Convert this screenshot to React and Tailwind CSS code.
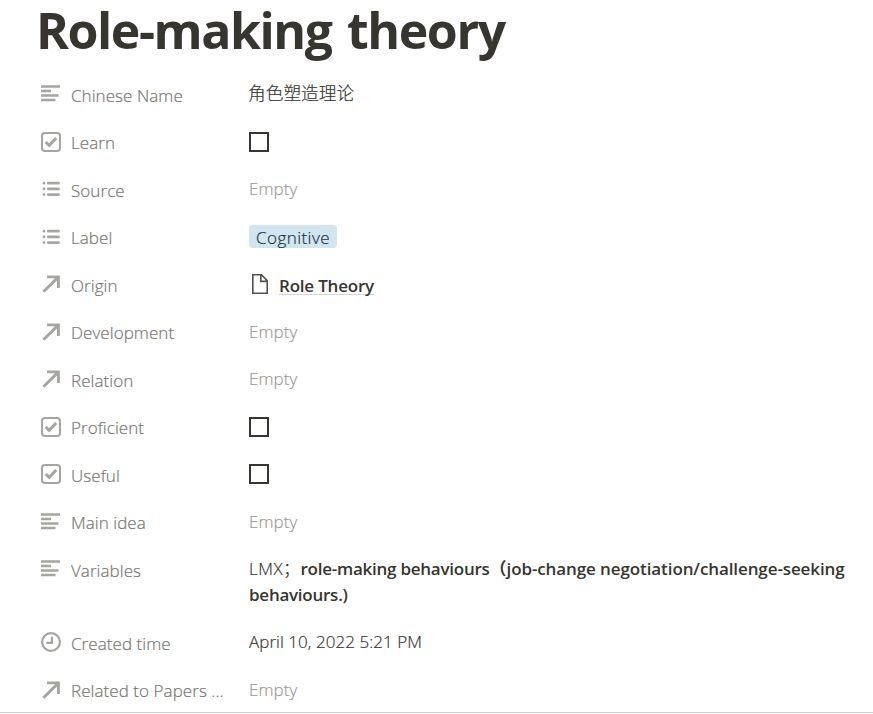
const icons = {
  text: (
    <svg viewBox="0 0 20 20" className="h-5 w-5" fill="#a5a5a1">
      <path d="M0 1.3h19v2.5H0zM0 5.8h10v2.5H0zM0 10.3h17.5v2.5H0zM0 14.8h14.5v2.5H0z" />
    </svg>
  ),
  check: (
    <svg viewBox="0 0 20 20" className="h-5 w-5" fill="none" stroke="#a5a5a1">
      <rect x="1" y="1" width="18" height="18" rx="3" strokeWidth="2" />
      <path d="M4.6 10l3.6 3.4 7-7.4" strokeWidth="3" />
    </svg>
  ),
  list: (
    <svg viewBox="0 0 20 20" className="h-5 w-5" stroke="#a5a5a1" strokeLinecap="round" strokeWidth="2.8">
      <path d="M7.3 4.2h10.2M7.3 9.9h10.2M7.3 15.6h10.2M2.9 4.2h.1M2.9 9.9h.1M2.9 15.6h.1" />
    </svg>
  ),
  arrow: (
    <svg viewBox="0 0 20 20" className="h-5 w-5" fill="none" stroke="#a5a5a1" strokeWidth="2.9">
      <path d="M6 2.9h11.4v11.2M17 3.4L2.4 17.8" />
    </svg>
  ),
  clock: (
    <svg viewBox="0 0 20 20" className="h-5 w-5" fill="none" stroke="#a5a5a1" strokeWidth="2.2">
      <circle cx="10" cy="10" r="8.9" />
      <path d="M10.9 4.8v6H5.2" />
    </svg>
  ),
};

const Empty = () => <span className="tracking-[0.08px] text-[#9b9a97] [-webkit-text-stroke:0.2px]">Empty</span>;
const Box = () => <span className="h-5 w-5 border-2 border-[#37352f]" />;

function Row({ icon, label, children, tall }) {
  return (
    <div className={tall ? "flex h-[73px] items-start" : "flex h-[47.5px] items-start"}>
      <div className="flex w-[208px] items-start gap-[10px]">
        <div className="mt-[13px]">{icons[icon]}</div>
        <span className="mt-[11.5px] whitespace-nowrap leading-[26px] tracking-[0.06px] text-[#787773] [-webkit-text-stroke:0.2px]">{label}</span>
      </div>
      <div className="mt-[10px] flex min-h-[26px] items-center leading-[26px]">{children}</div>
    </div>
  );
}

export default function App() {
  return (
    <div lang="zh-CN" className="flex h-[714px] flex-col bg-white font-['Open_Sans','Noto_Sans_CJK_SC',sans-serif] text-[17px] font-light text-[#37352f]">
      <div className="h-[712px] pl-[41px]">
        <h1 className="-ml-[5px] h-[71px] whitespace-nowrap text-[50px] font-bold leading-[61px] tracking-[-1.45px] [word-spacing:4px]">Role-making theory</h1>
        <Row icon="text" label="Chinese Name"><span className="-mt-[2px] -ml-px text-[17.7px] [-webkit-text-stroke:0.2px]">角色塑造理论</span></Row>
        <Row icon="check" label="Learn"><Box /></Row>
        <Row icon="list" label="Source"><Empty /></Row>
        <Row icon="list" label="Label">
          <span className="flex h-[23px] items-center rounded-[4px] bg-[#d3e5ef] px-[7px] pt-[2px] tracking-[0.45px] text-[#183347] [-webkit-text-stroke:0.2px]">Cognitive</span>
        </Row>
        <Row icon="arrow" label="Origin">
          <svg viewBox="0 0 16 20" className="ml-[3px] mr-[11px] h-5 w-4" fill="none" stroke="#55534e" strokeWidth="1.6">
            <path d="M.8.8h8.7l5.7 5.8v12.6H.8zM8.8.8v6.6h6.4" />
          </svg>
          <span className="mt-[2px] h-[19px] border-b border-[#d8d7d5] font-semibold leading-[20px] tracking-[-0.2px]">Role Theory</span>
        </Row>
        <Row icon="arrow" label="Development"><Empty /></Row>
        <Row icon="arrow" label="Relation"><Empty /></Row>
        <Row icon="check" label="Proficient"><Box /></Row>
        <Row icon="check" label="Useful"><Box /></Row>
        <Row icon="text" label="Main idea"><Empty /></Row>
        <Row icon="text" label="Variables" tall>
          <div className="whitespace-nowrap">
            <span className="tracking-[0.5px] [-webkit-text-stroke:0.2px]">LMX；</span>
            <b className="font-semibold tracking-[-0.25px]">role-making behaviours</b>
            <b className="font-semibold tracking-[-0.1px]">（job-change negotiation/challenge-seeking</b>
            <br />
            <b className="font-semibold tracking-[-0.25px]">behaviours.)</b>
          </div>
        </Row>
        <Row icon="clock" label="Created time"><span className="tracking-[0.05px] [-webkit-text-stroke:0.2px]">April 10, 2022 5:21 PM</span></Row>
        <Row icon="arrow" label="Related to Papers ..."><Empty /></Row>
      </div>
      <div className="h-px bg-[#cfcfcf]" />
    </div>
  );
}
